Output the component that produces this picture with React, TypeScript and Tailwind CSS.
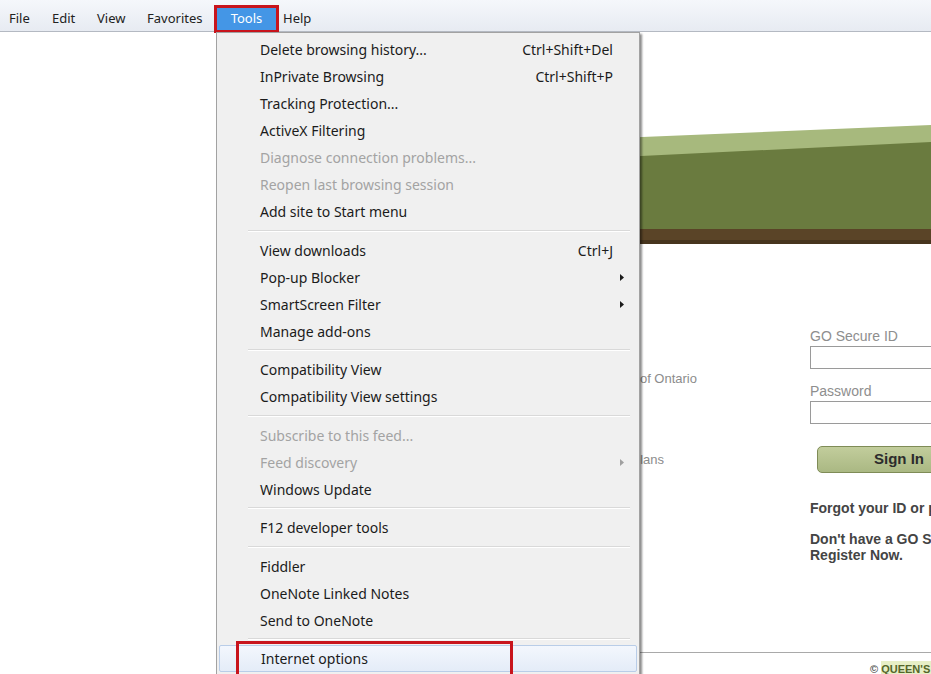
import React from 'react';

type MenuItem = {
  label: string;
  shortcut?: string;
  submenu?: boolean;
  disabled?: boolean;
  active?: boolean;
};

const toolsMenu: (MenuItem | 'sep')[] = [
  { label: 'Delete browsing history...', shortcut: 'Ctrl+Shift+Del' },
  { label: 'InPrivate Browsing', shortcut: 'Ctrl+Shift+P' },
  { label: 'Tracking Protection...' },
  { label: 'ActiveX Filtering' },
  { label: 'Diagnose connection problems...', disabled: true },
  { label: 'Reopen last browsing session', disabled: true },
  { label: 'Add site to Start menu' },
  'sep',
  { label: 'View downloads', shortcut: 'Ctrl+J' },
  { label: 'Pop-up Blocker', submenu: true },
  { label: 'SmartScreen Filter', submenu: true },
  { label: 'Manage add-ons' },
  'sep',
  { label: 'Compatibility View' },
  { label: 'Compatibility View settings' },
  'sep',
  { label: 'Subscribe to this feed...', disabled: true },
  { label: 'Feed discovery', submenu: true, disabled: true },
  { label: 'Windows Update' },
  'sep',
  { label: 'F12 developer tools' },
  'sep',
  { label: 'Fiddler' },
  { label: 'OneNote Linked Notes' },
  { label: 'Send to OneNote' },
  'sep',
  { label: 'Internet options', active: true },
];

function SubArrow({ disabled }: { disabled?: boolean }) {
  return (
    <svg width="4" height="7" viewBox="0 0 4 7">
      <path d="M0 0 L4 3.5 L0 7 Z" fill={disabled ? '#a0a0a0' : '#1b1b1b'} />
    </svg>
  );
}

function MenuRow({ item }: { item: MenuItem }) {
  const color = item.disabled ? 'text-[#a3a3a3]' : 'text-[#1b1b1b]';
  const shell = item.active
    ? 'mx-[2px] pl-[41px] border border-[#b9cde8] rounded-[2px] bg-gradient-to-b from-[#f3f7fd] to-[#e4ecf8]'
    : 'pl-[43px]';
  return (
    <div className={`flex h-[27px] items-center ${shell} ${color}`}>
      <span className="flex-1 whitespace-nowrap">{item.label}</span>
      {item.shortcut && <span className="whitespace-nowrap">{item.shortcut}</span>}
      <span className="flex w-[26px] items-center pl-[7px]">
        {item.submenu && <SubArrow disabled={item.disabled} />}
      </span>
    </div>
  );
}

function Separator() {
  return (
    <div className="flex h-[11.5px] items-center pl-[31px] pr-[9px]">
      <div className="h-[2px] w-full border-t border-[#d9d9d9] border-b border-b-white" />
    </div>
  );
}

function MenuBar() {
  return (
    <div className="flex h-[32px] border-b border-[#b4b9c2] bg-gradient-to-b from-[#f5f7fb] to-[#e7ebf2] text-[13px] text-[#222] font-['Noto_Sans',sans-serif]">
      <span className="w-[42px] pl-[9px] pt-[9px]">File</span>
      <span className="w-[45px] pl-[10px] pt-[9px]">Edit</span>
      <span className="w-[50px] pl-[10px] pt-[9px]">View</span>
      <span className="w-[77px] pl-[10px] pt-[9px]">Favorites</span>
      <span className="mt-[5px] flex h-[28px] w-[65px] items-center justify-center border-[3px] border-[#c8141c] bg-[#4496e6] text-white">
        Tools
      </span>
      <span className="pl-[4px] pt-[9px]">Help</span>
    </div>
  );
}

function Banner() {
  return (
    <svg width="701" height="120" viewBox="0 0 701 120" className="block shrink-0">
      <polygon points="0,30 701,1 701,120 0,120" fill="#a7b97d" />
      <polygon points="0,52 701,18 701,120 0,120" fill="#6a7b3f" />
      <rect x="0" y="105" width="701" height="15" fill="#5a4427" />
      <rect x="0" y="116" width="701" height="4" fill="#47351e" />
    </svg>
  );
}

// tail ends of the intro lines that show to the right of the open menu
function IntroLine({ text, width, top }: { text: string; width: string; top: string }) {
  return (
    <div className={`ml-[405px] flex justify-end overflow-hidden whitespace-nowrap leading-[16px] ${width} ${top}`}>
      <span>{text}</span>
    </div>
  );
}

function PageBody() {
  return (
    <div className="ml-[230px] flex w-[701px] flex-col font-['Liberation_Sans',Arial,sans-serif]">
      <div className="h-[92px] shrink-0" />
      <Banner />
      <div className="flex h-[408px] shrink-0">
        <div className="w-[580px] shrink-0 text-[13px] text-[#8c8c8c]">
          <IntroLine text="of Ontario" width="w-[62px]" top="mt-[127px]" />
          <IntroLine text="plans" width="w-[29px]" top="mt-[65px]" />
        </div>
        <div className="flex shrink-0 flex-col">
          <label className="mt-[84px] h-[16px] text-[14px] leading-[16px] text-[#8e8e8e]">GO Secure ID</label>
          <div className="mt-[2px] h-[23px] w-[200px] border border-[#9a9a9a] bg-white" />
          <label className="mt-[14px] h-[16px] text-[14px] leading-[16px] text-[#8e8e8e]">Password</label>
          <div className="mt-[2px] h-[23px] w-[200px] border border-[#9a9a9a] bg-white" />
          <button className="ml-[7px] mt-[22px] h-[27px] w-[164px] rounded-[5px] border border-[#7f8c57] bg-gradient-to-b from-[#c2cd9c] to-[#aab883] text-[15px] font-bold text-[#2c2c2c]">
            Sign In
          </button>
          <p className="mt-[27px] whitespace-nowrap text-[14px] font-bold leading-[16px] text-[#444]">Forgot your ID or password?</p>
          <p className="mt-[15px] whitespace-nowrap text-[14px] font-bold leading-[16px] text-[#444]">Don't have a GO Secure ID?</p>
          <p className="whitespace-nowrap text-[14px] font-bold leading-[16px] text-[#444]">Register Now.</p>
        </div>
      </div>
      <div className="flex h-[40px] shrink-0 border-t border-[#a9a9a9] pl-[640px] pt-[8px] text-[11px] font-bold whitespace-nowrap">
        <span className="text-[#555]">©&nbsp;</span>
        <span className="bg-[#e7efc6] text-[#55662a]">QUEEN'S PRINTER FOR ONTARIO</span>
      </div>
    </div>
  );
}

export default function App() {
  return (
    <div className="relative h-[674px] w-[931px] overflow-hidden bg-white">
      <MenuBar />
      <PageBody />

      {/* Tools drop-down, drawn over the page */}
      <div className="absolute left-[216px] top-[32px] w-[424px] border border-[#a2a2a2] bg-[#f0f0f0] pb-[20px] pt-[3px] text-[14px] font-['Noto_Sans',sans-serif] shadow-[2px_2px_2px_rgba(0,0,0,0.45)]">
        {toolsMenu.map((item, i) =>
          item === 'sep' ? <Separator key={i} /> : <MenuRow key={i} item={item} />
        )}
      </div>

      {/* red callout box round Internet options */}
      <div className="absolute left-[236px] top-[641px] h-[50px] w-[277px] border-[3px] border-[#c8141c]" />
    </div>
  );
}
